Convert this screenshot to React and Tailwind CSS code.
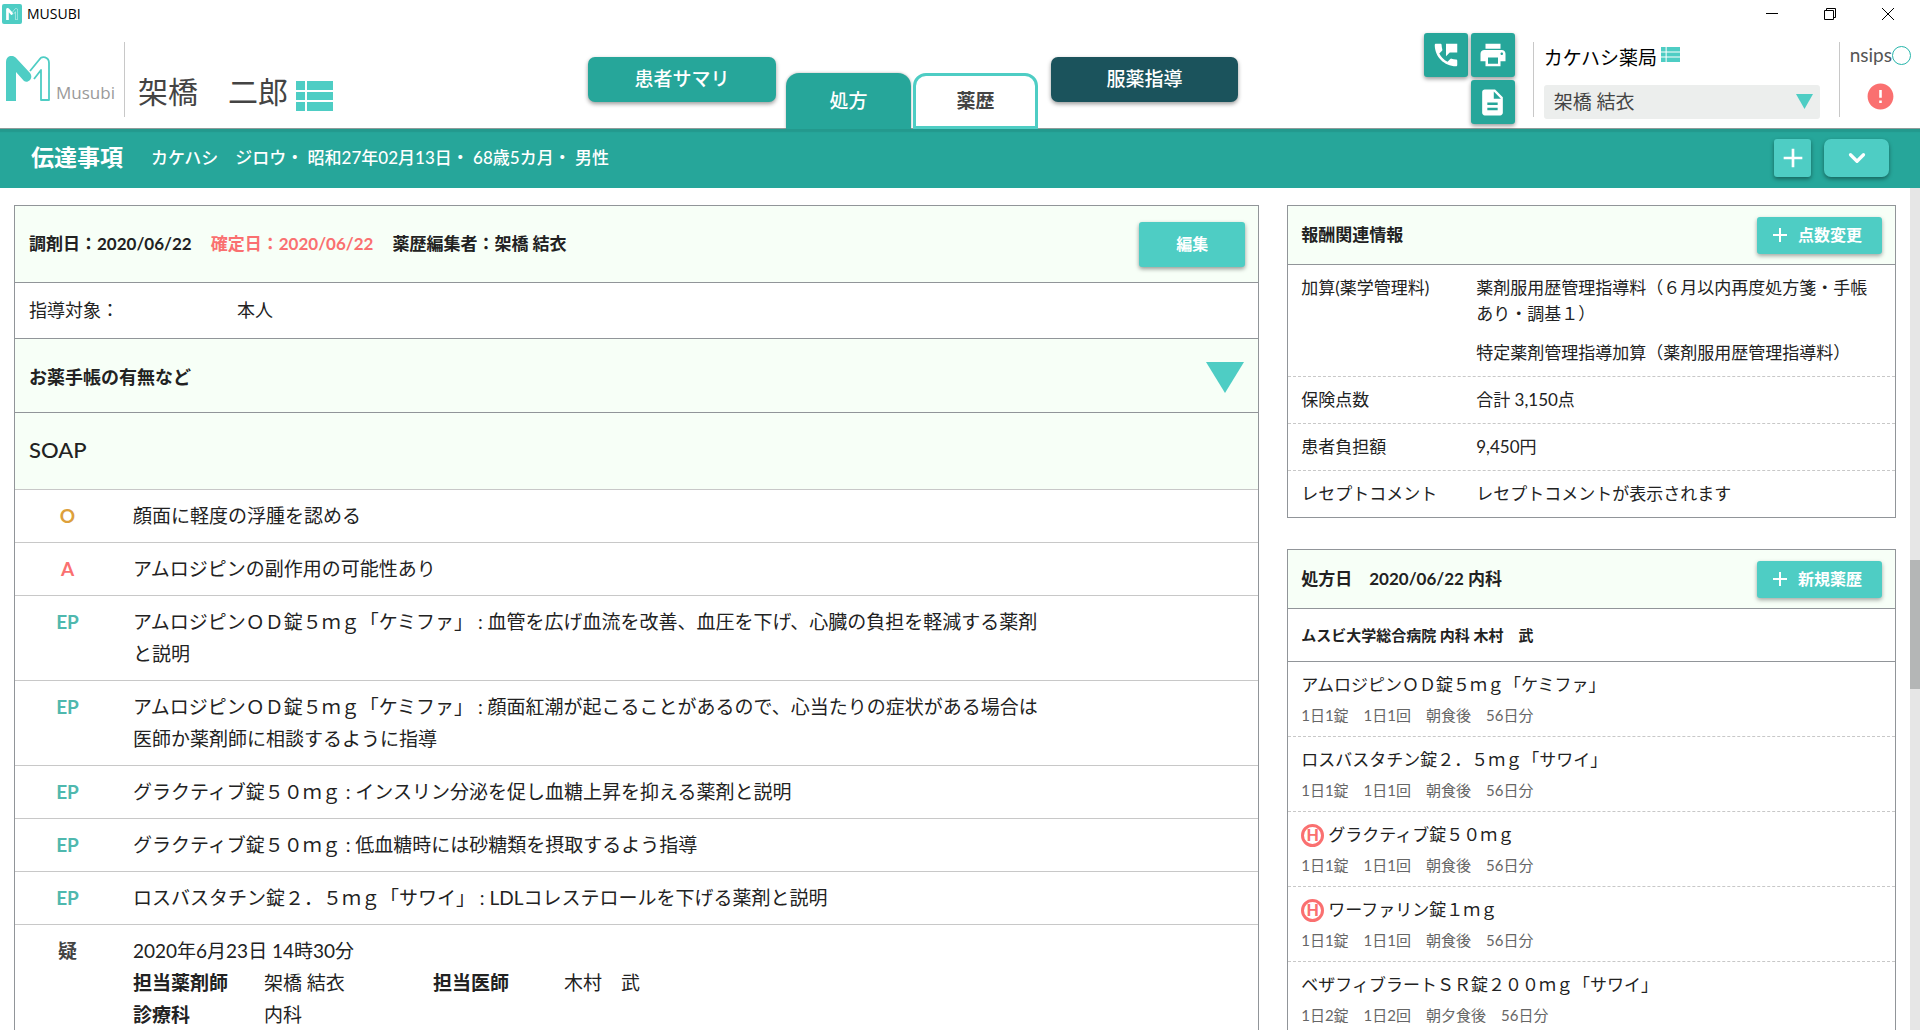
import React, { useState } from "react";
import { MdPermPhoneMsg, MdPrint, MdDescription, MdError, MdAdd } from "react-icons/md";
import { ChevronDown } from "lucide-react";

const FONT = "font-['Lato','Noto_Sans_CJK_JP',sans-serif]";

const soapRows = [
  { type: "O", text: "顔面に軽度の浮腫を認める" },
  { type: "A", text: "アムロジピンの副作用の可能性あり" },
  { type: "EP", text: "アムロジピンＯＤ錠５ｍｇ「ケミファ」 : 血管を広げ血流を改善、血圧を下げ、心臓の負担を軽減する薬剤と説明" },
  { type: "EP", text: "アムロジピンＯＤ錠５ｍｇ「ケミファ」 : 顔面紅潮が起こることがあるので、心当たりの症状がある場合は医師か薬剤師に相談するように指導" },
  { type: "EP", text: "グラクティブ錠５０ｍｇ : インスリン分泌を促し血糖上昇を抑える薬剤と説明" },
  { type: "EP", text: "グラクティブ錠５０ｍｇ : 低血糖時には砂糖類を摂取するよう指導" },
  { type: "EP", text: "ロスバスタチン錠２．５ｍｇ「サワイ」 : LDLコレステロールを下げる薬剤と説明" },
];

const feeRows = [
  {
    label: "加算(薬学管理料)",
    values: ["薬剤服用歴管理指導料（６月以内再度処方箋・手帳あり・調基１）", "特定薬剤管理指導加算（薬剤服用歴管理指導料）"],
  },
  { label: "保険点数", values: ["合計 3,150点"] },
  { label: "患者負担額", values: ["9,450円"] },
  { label: "レセプトコメント", values: ["レセプトコメントが表示されます"] },
];

const drugs = [
  { name: "アムロジピンＯＤ錠５ｍｇ「ケミファ」", usage: "1日1錠　1日1回　朝食後　56日分" },
  { name: "ロスバスタチン錠２．５ｍｇ「サワイ」", usage: "1日1錠　1日1回　朝食後　56日分" },
  { name: "グラクティブ錠５０ｍｇ", usage: "1日1錠　1日1回　朝食後　56日分", highRisk: true },
  { name: "ワーファリン錠１ｍｇ", usage: "1日1錠　1日1回　朝食後　56日分", highRisk: true },
  { name: "ベザフィブラートＳＲ錠２００ｍｇ「サワイ」", usage: "1日2錠　1日2回　朝夕食後　56日分" },
];

const getTypeColor = (type) => {
  switch (type) {
    case "O":
      return "text-[#dda03c]";
    case "A":
      return "text-[#fa7070]";
    case "EP":
      return "text-[#4fb8ae]";
    default:
      return "text-[#444444]";
  }
};

function ListIcon({ className }) {
  return (
    <svg viewBox="0 0 37 30" preserveAspectRatio="none" className={className} fill="#4ecdc4" aria-hidden="true">
      <path d="M0 0h9v9H0zM11 0h26v9H11zM0 11h9v8H0zM11 11h26v8H11zM0 21h9v9H0zM11 21h26v9H11z" />
    </svg>
  );
}

function Triangle({ className }) {
  return (
    <svg viewBox="0 0 38 31" preserveAspectRatio="none" className={className} fill="#4ecdc4" aria-hidden="true">
      <path d="M0 0h38L19 31z" />
    </svg>
  );
}

// Left stroke is solid, right stroke is only outlined
function LogoMark({ className, color }) {
  return (
    <svg viewBox="0 0 44 45" className={className} aria-hidden="true">
      <path d="M0 45V6C0-1 7-2 11 3L24 17c4 5-2 11-6 8L10 16v29z" fill={color} />
      <path d="M24 15L33 4c3-5 10-3 10 3v37h-8V14l-7 9" fill="none" stroke={color} strokeWidth="1.8" strokeLinejoin="round" />
    </svg>
  );
}

function TitleBar() {
  return (
    <div className="flex h-7 items-center justify-between pl-0.5 pr-[26px]">
      <div className="flex items-center gap-[5px]">
        <span className="flex size-5 items-center justify-center rounded-xs bg-[#4ecdc4]">
          <LogoMark className="size-3" color="#ffffff" />
        </span>
        <span className="font-['Open_Sans',sans-serif] text-[14px] leading-5 text-black">MUSUBI</span>
      </div>
      <div className="flex items-center gap-[46px]">
        <button aria-label="最小化">
          <svg className="size-3" viewBox="0 0 12 12" stroke="black"><path d="M0 5.5h12" /></svg>
        </button>
        <button aria-label="元に戻す">
          <svg className="size-3" viewBox="0 0 12 12" fill="none" stroke="black"><path d="M.5 2.5h9v9h-9zM2.5 2.5v-2h9v9h-2" /></svg>
        </button>
        <button aria-label="閉じる">
          <svg className="size-3" viewBox="0 0 12 12" stroke="black"><path d="M0 0l12 12M12 0L0 12" /></svg>
        </button>
      </div>
    </div>
  );
}

function IconButton({ label, children }) {
  return (
    <button aria-label={label} className="flex size-11 items-center justify-center rounded-[3px] bg-[#26a69a] text-white shadow-[0_2px_4px_rgba(0,0,0,0.4)]">
      {children}
    </button>
  );
}

function Header() {
  const [staff, setStaff] = useState("架橋 結衣");

  return (
    <header className="flex h-[101px] border-b border-[#8f9c9a]">
      <div className="flex w-[588px] pl-1.5 pt-3.5">
        <div className="flex h-[75px] w-[119px] items-end gap-1.5 border-r border-[#c8c8c8] pb-4">
          <LogoMark className="h-[45px] w-11" color="#4ecdc4" />
          <span className="font-['Open_Sans',sans-serif] text-[17px] leading-4 text-[#9a9a9a]">Musubi</span>
        </div>
        <div className="flex h-[75px] items-end gap-2 pb-1.5 pl-[13px]">
          <h1 className="text-[30px] leading-10 text-[#444444]">架橋　二郎</h1>
          <ListIcon className="h-[30px] w-[37px]" />
        </div>
      </div>

      <nav className="flex items-start text-[19px] font-medium">
        <button className="mt-[29px] h-[45px] w-[188px] rounded-[7px] bg-[#26a69a] text-white shadow-[0_2px_4px_rgba(0,0,0,0.4)]">患者サマリ</button>
        <button className="ml-2.5 mt-[45px] h-[56px] w-[125px] rounded-t-[13px] bg-[#26a69a] text-white shadow-[0_0_3px_rgba(0,0,0,0.3)]">処方</button>
        <button className="ml-0.5 mt-[45px] h-[56px] w-[125px] rounded-t-[13px] border-[3px] border-[#4ecdc4] bg-white font-bold text-[#444444]">薬歴</button>
        <button className="ml-[13px] mt-[29px] h-[45px] w-[187px] rounded-[7px] bg-[#1b535c] text-white shadow-[0_2px_4px_rgba(0,0,0,0.4)]">服薬指導</button>
      </nav>

      <div className="ml-auto flex pr-[9px] pt-[5px]">
        <div className="grid grid-cols-2 gap-[3px] self-start">
          <IconButton label="電話"><MdPermPhoneMsg size={30} /></IconButton>
          <IconButton label="印刷"><MdPrint size={30} /></IconButton>
          <span />
          <IconButton label="文書"><MdDescription size={31} /></IconButton>
        </div>
        <div className="ml-[18px] mt-[9px] h-[75px] w-px bg-[#c8c8c8]" />
        <div className="ml-2.5 flex w-[276px] flex-col gap-2.5 pt-2">
          <div className="flex items-center gap-1 text-[19px] leading-[34px] text-black">
            カケハシ薬局
            <ListIcon className="mb-2 h-[15px] w-[19px]" />
          </div>
          <div className="relative">
            <select
              aria-label="担当者"
              value={staff}
              onChange={(e) => setStaff(e.target.value)}
              className="h-[34px] w-full appearance-none rounded-[3px] bg-[#eceeed] pl-2.5 text-[19px] text-[#444444]"
            >
              <option>架橋 結衣</option>
            </select>
            <Triangle className="pointer-events-none absolute right-[7px] top-[9px] h-[15px] w-[17px]" />
          </div>
        </div>
        <div className="ml-[19px] mt-[9px] h-[75px] w-px bg-[#c8c8c8]" />
        <div className="ml-2.5 flex flex-col items-center gap-3 pt-2">
          <div className="flex items-center text-[19px] leading-7 text-[#555555]">
            nsips
            <span className="size-[19px] rounded-full border border-[#26b5aa]" />
          </div>
          <MdError size={31} className="text-[#fa7070]" />
        </div>
      </div>
    </header>
  );
}

function PatientBar() {
  return (
    <div className="flex h-[59px] items-center bg-[#26a69a] pb-0.5 pl-[31px] pr-[31px] text-white shadow-[inset_0_4px_1px_-1px_rgba(0,0,0,0.08)]">
      <h2 className="text-[23px] font-bold">伝達事項</h2>
      <p className="ml-7 text-[17px] font-medium">カケハシ　ジロウ・ 昭和27年02月13日・ 68歳5カ月・ 男性</p>
      <div className="ml-auto flex gap-[13px]">
        <button aria-label="追加" className="flex h-[38px] w-[37px] items-center justify-center rounded-[3px] bg-[#4ecdc4] shadow-[0_2px_4px_rgba(0,0,0,0.4)]">
          <MdAdd size={32} />
        </button>
        <button aria-label="開く" className="flex h-[38px] w-[65px] items-center justify-center rounded-[7px] bg-[#4ecdc4] shadow-[0_2px_4px_rgba(0,0,0,0.4)]">
          <ChevronDown size={26} strokeWidth={3} />
        </button>
      </div>
    </div>
  );
}

function AddButton({ children }) {
  return (
    <button className="flex h-[37px] w-[125px] items-center gap-1.5 rounded-[3px] bg-[#4ecdc4] pl-[11px] text-[16px] font-bold text-white shadow-[0_2px_4px_rgba(0,0,0,0.35)]">
      <MdAdd size={24} />
      {children}
    </button>
  );
}

function SoapPanel() {
  return (
    <section className="border border-[#919599]">
      <div className="flex h-[77px] items-center border-b border-[#919599] bg-[#f7fff7] pl-3.5 pr-[13px] text-[17px] font-bold">
        <div className="flex gap-[19px]">
          <span>調剤日：2020/06/22</span>
          <span className="text-[#fa7070]">確定日：2020/06/22</span>
          <span>薬歴編集者：架橋 結衣</span>
        </div>
        <button className="ml-auto h-[45px] w-[106px] rounded-[3px] bg-[#4ecdc4] text-[16px] text-white shadow-[0_2px_4px_rgba(0,0,0,0.4)]">編集</button>
      </div>
      <div className="flex h-14 items-center border-b border-[#919599] pl-3.5 text-[18px]">
        <span className="w-[208px]">指導対象：</span>
        <span>本人</span>
      </div>
      <div className="flex h-[74px] items-center justify-between border-b border-[#919599] bg-[#f7fff7] pl-3.5 pr-3.5 pt-1">
        <h3 className="text-[18px] font-bold">お薬手帳の有無など</h3>
        <button aria-label="開く"><Triangle className="h-[31px] w-[38px]" /></button>
      </div>
      <div className="flex h-[77px] items-center border-b border-[#c8c8c8] bg-[#f7fff7] pb-1 pl-3.5">
        <h3 className="text-[22px] font-medium">SOAP</h3>
      </div>

      <div className="text-[19px] leading-8">
        {soapRows.map((row, i) => (
          <div key={i} className="flex border-b border-[#c8c8c8] py-2.5">
            <span className={`w-[105px] text-center font-bold ${getTypeColor(row.type)}`}>{row.type}</span>
            <p className="ml-[13px] max-w-[910px]">{row.text}</p>
          </div>
        ))}
        <div className="flex py-2.5">
          <span className={`w-[105px] text-center font-bold ${getTypeColor("疑")}`}>疑</span>
          <div className="ml-[13px]">
            <p>2020年6月23日 14時30分</p>
            <dl className="grid grid-cols-[131px_169px_131px_auto]">
              <dt className="font-bold">担当薬剤師</dt>
              <dd>架橋 結衣</dd>
              <dt className="font-bold">担当医師</dt>
              <dd>木村　武</dd>
              <dt className="font-bold">診療科</dt>
              <dd>内科</dd>
            </dl>
          </div>
        </div>
      </div>
    </section>
  );
}

function FeePanel() {
  return (
    <section className="border border-[#919599]">
      <div className="flex h-[59px] items-center justify-between border-b border-[#919599] bg-[#f7fff7] px-[13px]">
        <h3 className="text-[17px] font-bold">報酬関連情報</h3>
        <AddButton>点数変更</AddButton>
      </div>
      <dl className="divide-y divide-dashed divide-[#c8c8c8] text-[17px] leading-[26px]">
        {feeRows.map((row) => (
          <div key={row.label} className="flex px-[13px] py-2.5">
            <dt className="w-[175px] shrink-0">{row.label}</dt>
            <dd className="flex flex-col gap-[13px]">
              {row.values.map((value) => (
                <p key={value}>{value}</p>
              ))}
            </dd>
          </div>
        ))}
      </dl>
    </section>
  );
}

function PrescriptionPanel() {
  return (
    <section className="border border-[#919599]">
      <div className="flex h-[59px] items-center justify-between border-b border-[#919599] bg-[#f7fff7] px-[13px]">
        <h3 className="text-[17px] font-bold">処方日　2020/06/22 内科</h3>
        <AddButton>新規薬歴</AddButton>
      </div>
      <div className="flex h-[53px] items-center border-b border-[#919599] px-[13px] text-[15px] font-bold">
        ムスビ大学総合病院 内科 木村　武
      </div>
      <ul className="divide-y divide-dashed divide-[#c8c8c8]">
        {drugs.map((drug) => (
          <li key={drug.name} className="px-[13px] pb-[9px] pt-[9px]">
            <p className="flex items-center gap-1 text-[17px] leading-7">
              {drug.highRisk && (
                <span className="flex size-[23px] items-center justify-center rounded-full border-[3px] border-[#fa7070] text-[16px] font-black text-[#fa7070]">H</span>
              )}
              {drug.name}
            </p>
            <p className="pt-1 text-[15px] leading-6 text-[#666666]">{drug.usage}</p>
          </li>
        ))}
      </ul>
    </section>
  );
}

export default function App() {
  return (
    <div className={`flex h-screen flex-col overflow-hidden bg-white text-[#222222] ${FONT}`} lang="ja">
      <TitleBar />
      <Header />
      <PatientBar />
      <div className="flex min-h-0 flex-1">
        <main className="grid flex-1 grid-cols-[45fr_22fr] gap-7 overflow-hidden px-3.5 pt-[17px]">
          <SoapPanel />
          <div className="flex flex-col gap-[31px]">
            <FeePanel />
            <PrescriptionPanel />
          </div>
        </main>
        {/* Scroll track */}
        <div className="w-2.5 bg-[#e6e6e6] pt-[372px]">
          <div className="h-[129px] bg-[#b4b6b6]" />
        </div>
      </div>
    </div>
  );
}
